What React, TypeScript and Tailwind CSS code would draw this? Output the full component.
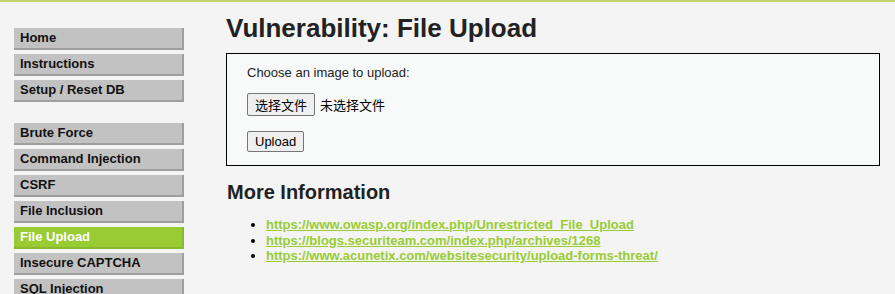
import React from 'react'

const menuTop = ['Home', 'Instructions', 'Setup / Reset DB']
const menuVulns = [
  'Brute Force',
  'Command Injection',
  'CSRF',
  'File Inclusion',
  'File Upload',
  'Insecure CAPTCHA',
  'SQL Injection',
]

const links = [
  'https://www.owasp.org/index.php/Unrestricted_File_Upload',
  'https://blogs.securiteam.com/index.php/archives/1268',
  'https://www.acunetix.com/websitesecurity/upload-forms-threat/',
]

function MenuItem({ label, active }: { label: string; active?: boolean }) {
  return (
    <li
      className={`h-[22px] w-[170px] pl-[6px] flex items-center text-[13px] font-bold border-r-2 border-b-2 ${
        active
          ? 'bg-[#9c3] text-white border-[#8ab82e]'
          : 'bg-[#c2c2c2] text-[#111] border-[#9e9e9e]'
      }`}
    >
      {label}
    </li>
  )
}

export default function App() {
  return (
    <div className="w-[895px] h-[294px] overflow-hidden bg-[#f4f4f4] border-t-2 border-[#c3d66a] font-['Liberation_Sans',Arial,sans-serif] text-[#222]">
      <div className="flex">
        {/* Sidebar */}
        <aside className="w-[226px] shrink-0 pl-[14px] pt-[26px]">
          <ul className="flex flex-col gap-[4px]">
            {menuTop.map((m) => (
              <MenuItem key={m} label={m} />
            ))}
          </ul>
          <ul className="flex flex-col gap-[4px] mt-[21px]">
            {menuVulns.map((m) => (
              <MenuItem key={m} label={m} active={m === 'File Upload'} />
            ))}
          </ul>
        </aside>

        {/* Main */}
        <main className="w-[654px] pt-[11px]">
          <h1 className="text-[26px] leading-[30px] font-bold text-[#222]">
            Vulnerability: File Upload
          </h1>
          <div className="mt-[10px] h-[113px] border border-black bg-[#f8f9f9] pl-[20px] pt-[11px] text-[13px]">
            <div className="leading-[15px] text-[#222]">Choose an image to upload:</div>
            <div className="mt-[13px] flex items-center gap-[5px] h-[23px]">
              <span className="h-[23px] px-[7px] flex items-center bg-[#efefef] border border-[#767676] rounded-[2px] text-[13px] text-black font-['Noto_Sans_CJK_SC',sans-serif]">
                选择文件
              </span>
              <span className="text-[13px] text-black font-['Noto_Sans_CJK_SC',sans-serif]">未选择文件</span>
            </div>
            <div className="mt-[15px]">
              <span className="inline-flex h-[21px] px-[7px] items-center bg-[#efefef] border border-[#767676] rounded-[2px] text-[13px] text-black">
                Upload
              </span>
            </div>
          </div>

          <h2 className="mt-[14px] text-[20px] leading-[24px] font-bold text-[#222] pl-[1px]">
            More Information
          </h2>
          <ul className="mt-[13px] pl-[40px] list-disc text-[13px] leading-[15.5px] font-bold">
            {links.map((l) => (
              <li key={l} className="marker:text-black">
                <a href="#" className="text-[#99cc33] underline">
                  {l}
                </a>
              </li>
            ))}
          </ul>
        </main>
      </div>
    </div>
  )
}
